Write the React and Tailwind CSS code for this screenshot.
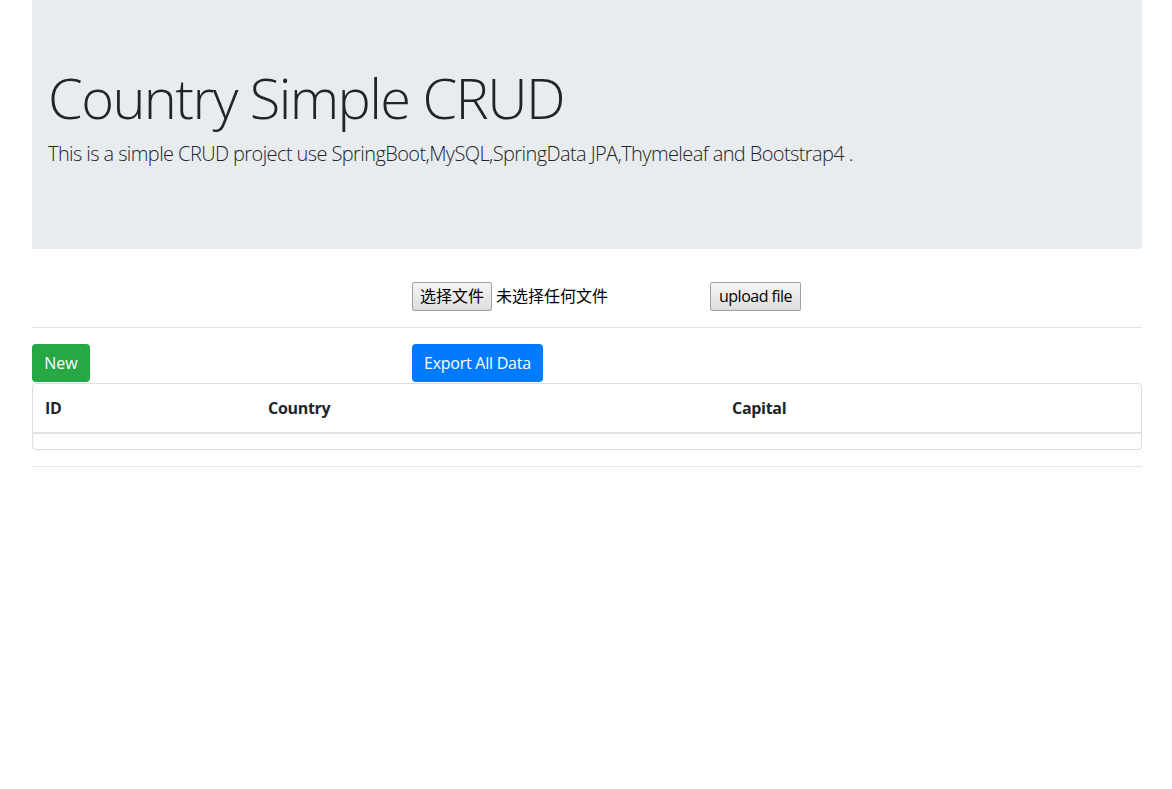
export default function App() {
  const font = { fontFamily: '"Open Sans", "Noto Sans CJK SC", sans-serif' };
  return (
    <div className="min-h-screen bg-white text-[#212529]" style={font}>
      <div className="ml-[32px] w-[1110px]">
        {/* Jumbotron */}
        <div className="bg-[#e9ecef] px-[16px] pt-[64px] pb-[64px] mb-[32px]">
          <h1 className="text-[56px] font-light leading-[1.2] mb-[8px] tracking-[-1.6px]">Country Simple CRUD</h1>
          <p className="text-[20px] font-light leading-[1.5] mb-[16px] tracking-[-0.6px]">
            This is a simple CRUD project use SpringBoot,MySQL,SpringData JPA,Thymeleaf and Bootstrap4 .
          </p>
        </div>

        {/* Upload form */}
        <div className="flex items-center h-[30px] pl-[380px] text-[16px]">
          <button className="h-[29px] px-[7px] border border-[#a0a0a0] rounded-[2px] bg-gradient-to-b from-[#f6f6f6] to-[#dddddd] text-[16px] text-black">选择文件</button>
          <span className="ml-[4px] w-[214px] text-black">未选择任何文件</span>
          <button className="h-[29px] px-[8px] border border-[#a0a0a0] rounded-[2px] bg-gradient-to-b from-[#f6f6f6] to-[#dddddd] text-[16px] text-black tracking-[-0.5px]">upload file</button>
        </div>

        <div className="mt-[16px] border-t border-[#e5e5e5]" />

        {/* Actions */}
        <div className="mt-[16px] flex">
          <button className="h-[38px] px-[12px] rounded-[4px] bg-[#28a745] text-white text-[16px] w-[58px]">New</button>
          <button className="ml-[322px] h-[38px] px-[12px] rounded-[4px] bg-[#007bff] text-white text-[16px] tracking-[-0.25px]">Export All Data</button>
        </div>

        {/* Table */}
        <div className="mt-[1px] border border-[#dcdcdc] rounded-[4px]">
          <div className="grid grid-cols-[223px_464px_1fr] h-[50px] items-center border-b-2 border-[#dee2e6] font-bold text-[16px] tracking-[-0.3px]">
            <div className="pl-[12px]">ID</div>
            <div className="pl-[12px]">Country</div>
            <div className="pl-[12px]">Capital</div>
          </div>
          <div className="h-[15px]" />
        </div>

        <div className="mt-[16px] border-t border-[#e5e5e5]" />
      </div>
    </div>
  );
}
